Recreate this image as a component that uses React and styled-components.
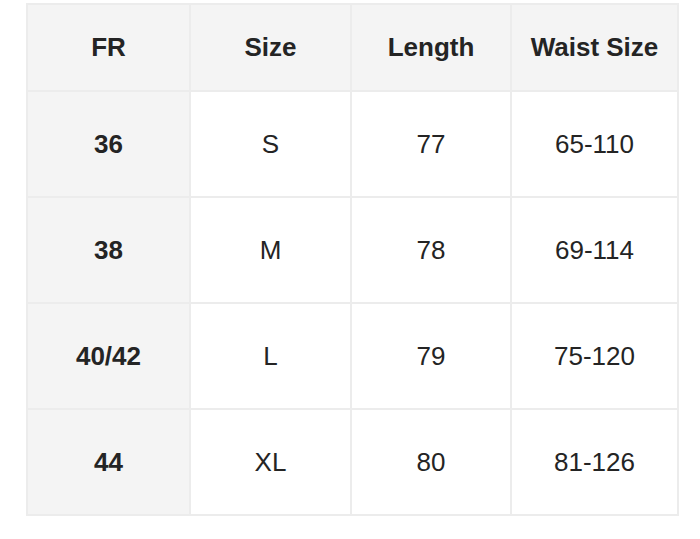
import React from "react";
import styled, { createGlobalStyle } from "styled-components";

const GlobalStyle = createGlobalStyle`
  body {
    margin: 0;
    background: #fff;
    font-family: "Liberation Sans", Arial, sans-serif;
  }
`;

const Page = styled.div`
  padding: 3px 0 0 26px;
`;

const Table = styled.table`
  border-collapse: collapse;
  table-layout: fixed;
  width: 651px;
  color: #242424;
  font-size: 26px;
`;

const Cell = styled.td`
  border: 2px solid #ececec;
  text-align: center;
  vertical-align: middle;
  padding: 0;
  height: ${(p) => (p.$head ? 85 : 104)}px;
  font-weight: ${(p) => (p.$bold ? 700 : 400)};
  background: ${(p) => (p.$shade ? "#f4f4f4" : "#fff")};
`;

const columns = [163, 161, 160, 167];
const header = ["FR", "Size", "Length", "Waist Size"];
const rows = [
  ["36", "S", "77", "65-110"],
  ["38", "M", "78", "69-114"],
  ["40/42", "L", "79", "75-120"],
  ["44", "XL", "80", "81-126"],
];

export default function App() {
  return (
    <Page>
      <GlobalStyle />
      <Table>
        <colgroup>
          {columns.map((w, i) => (
            <col key={i} style={{ width: w }} />
          ))}
        </colgroup>
        <thead>
          <tr>
            {header.map((h) => (
              <Cell as="th" key={h} $head $bold $shade>
                {h}
              </Cell>
            ))}
          </tr>
        </thead>
        <tbody>
          {rows.map((r) => (
            <tr key={r[0]}>
              {r.map((v, i) => (
                <Cell key={i} $bold={i === 0} $shade={i === 0}>
                  {v}
                </Cell>
              ))}
            </tr>
          ))}
        </tbody>
      </Table>
    </Page>
  );
}
